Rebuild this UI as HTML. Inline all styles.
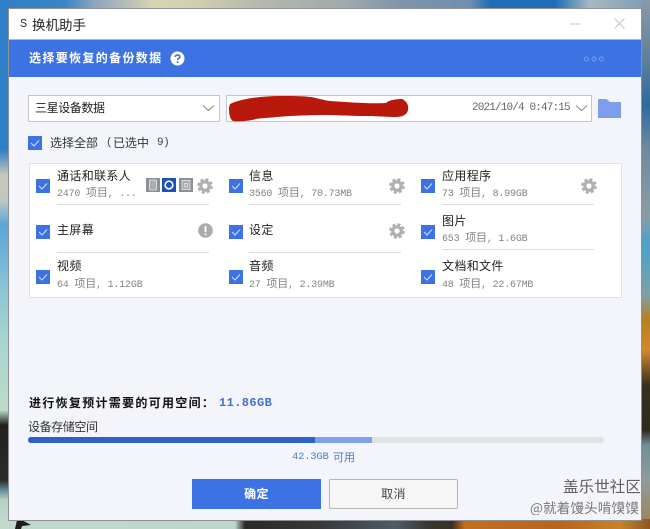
<!DOCTYPE html>
<html lang="zh"><head><meta charset="utf-8"><title>换机助手</title>
<style>
html,body{margin:0;padding:0}
body{width:650px;height:529px;position:relative;overflow:hidden;background:#c5dccf;font-family:"Liberation Sans","Noto Sans CJK SC",sans-serif}
div,svg{position:absolute}
.t{white-space:nowrap;color:#222;font-size:12px;line-height:16px;letter-spacing:.35px;font-family:"Noto Sans CJK SC",sans-serif}
.s{white-space:nowrap;color:#838383;font-size:10px;line-height:14px;font-family:"Liberation Mono","Noto Sans CJK SC",monospace;letter-spacing:-.2px}
.s b{font-weight:400;font-size:11px}
.cb{width:14px;height:14px;background:#3d72e3}
.ln{height:1px;background:#dcdde0;width:152px}
.sel{background:#fff;border:1px solid #c4c6ca;box-sizing:border-box}
</style></head><body>
<div style="left:0;top:0;width:650px;height:10px;background:linear-gradient(90deg,#2f7fc6 0,#3a84c6 65px,#8ea6bc 95px,#b5bcb8 125px,#d9d5b2 155px,#d2cfae 195px,#b5b8ac 260px,#a0aaac 345px,#7f95ab 400px,#6f8fae 470px,#1f6db8 490px,#1f6db8 555px,#a8b9c0 590px,#7a9ab5 650px)"></div>
<div style="left:0;top:0;width:9px;height:529px;background:linear-gradient(180deg,#2f80c8 0,#2e80c8 150px,#c9c8b8 175px,#c0c8c0 200px,#5aa5d8 225px,#8cc4d6 290px,#a8d4d0 340px,#bcdcc8 410px,#20201f 425px,#2a2a28 480px,#5f8a95 490px,#b5d3c4 500px,#c5dccf 529px)"></div>
<div style="left:641px;top:0;width:9px;height:529px;background:linear-gradient(180deg,#8a9aa8 0,#5f8096 60px,#2d6a9e 105px,#6f8a9e 150px,#8b9ca6 215px,#4aa2cb 245px,#7fa0a6 295px,#b8801f 320px,#cf8a2c 350px,#3a2f20 385px,#2e2a20 430px,#6f8e96 445px,#8f9c9c 480px,#a08052 529px)"></div>
<div style="left:0;top:519px;width:650px;height:10px;background:linear-gradient(90deg,#c0d9cc 0,#bcd6cc 235px,#2c2a28 245px,#38383a 320px,#4e5c66 395px,#3a3530 430px,#3a3024 452px,#c46e20 465px,#b8651c 560px,#c8822a 620px,#8a5a22 650px)"></div>
<svg style="left:14px;top:519px" width="18" height="10"><path d="M1 10 L3 1 L6 0 L17 6 L8 7 L7 10Z" fill="#1c1c1c"/></svg>

<div style="left:8px;top:8px;width:634px;height:513px;background:#8d9095"></div>
<div style="left:9px;top:9px;width:632px;height:511px;background:#f3f5fa"></div>
<div style="left:9px;top:9px;width:632px;height:30px;background:#fff"></div>
<div style="left:9px;top:39px;width:632px;height:1px;background:#a9bbe0"></div>
<div style="left:9px;top:40px;width:632px;height:37px;background:#3d72e3"></div>

<div class="s" style="left:20px;top:17px;font-size:12px;color:#333">S</div>
<div class="t" style="left:32px;top:15px;font-size:13.5px;line-height:18px;letter-spacing:0;color:#222">换机助手</div>
<svg style="left:569px;top:18px" width="15" height="12"><path d="M1 6H11.5" stroke="#cfcfcf" stroke-width="1.2"/></svg>
<svg style="left:613px;top:17px" width="14" height="14"><path d="M1.5 1.5L11.5 11.5M11.5 1.5L1.5 11.5" stroke="#c8c8c8" stroke-width="1.1" fill="none"/></svg>

<div class="t" style="left:29px;top:50px;color:#fff;font-size:12px;font-weight:700;letter-spacing:1.35px">选择要恢复的备份数据</div>
<svg style="left:170px;top:51px" width="15" height="15"><circle cx="7.5" cy="7.5" r="7" fill="#fff"/><path d="M5.2 6C5.3 3.4 9.9 3.4 9.9 5.9C9.9 7.4 7.6 7.4 7.6 9" fill="none" stroke="#3d72e3" stroke-width="1.6"/><circle cx="7.6" cy="11" r="1" fill="#3d72e3"/></svg>
<svg style="left:583px;top:54px" width="22" height="10" fill="none" stroke="#7d9eea" stroke-width="1"><circle cx="3.5" cy="5" r="2"/><circle cx="11" cy="5" r="2"/><circle cx="18.5" cy="5" r="2"/></svg>

<div class="sel" style="left:28px;top:95px;width:192px;height:27px"></div>
<div class="t" style="left:35px;top:100px;color:#222;letter-spacing:-.4px">三星设备数据</div>
<svg style="left:202px;top:104px" width="14" height="9"><path d="M1 1.5L6.5 6.5L12 1.5" fill="none" stroke="#8a8a8a" stroke-width="1.1"/></svg>
<div class="sel" style="left:226px;top:95px;width:366px;height:27px"></div>
<svg style="left:226px;top:94px" width="190" height="30"><path d="M4 10C14 5 34 2 54 2C66 2 76 2 84 3C92 4 96 6 104 7C122 8 142 10 160 9C163 6 170 5 176 5C181 7 183 12 182 16C181 21 176 23 170 23C158 23 152 22 140 22C124 22 112 21 100 21C82 21 62 22 50 23C42 24 36 24 30 25C24 27 12 28 7 27C3 25 2 14 4 10Z" fill="#b9180c"/></svg>
<div class="s" style="left:472px;top:101px;color:#666;font-size:11px;letter-spacing:-.85px">2021/10/4 0:47:15</div>
<svg style="left:575px;top:104px" width="14" height="9"><path d="M1 1.5L6.5 6.5L12 1.5" fill="none" stroke="#8a8a8a" stroke-width="1.1"/></svg>
<svg style="left:598px;top:99px" width="24" height="20"><path d="M0 1C0 .4.4 0 1 0H8.5L12 3H23V19H0Z" fill="#7b9fee"/></svg>

<svg class="cb" style="left:28px;top:136px" viewBox="0 0 14 14"><path d="M3 7L6 10L11 4.5" fill="none" stroke="#cfdcf8" stroke-width="1.1"/></svg>
<div class="t" style="left:50px;top:135px;letter-spacing:0;color:#333">选择全部</div>
<div class="s" style="left:106px;top:136px;font-size:11px;color:#444">(</div>
<div class="t" style="left:113px;top:135px;letter-spacing:0;color:#333">已选中</div>
<div class="s" style="left:157px;top:136px;font-size:11px;color:#444;letter-spacing:-.5px">9)</div>

<div style="left:29px;top:163px;width:593px;height:135px;box-sizing:border-box;background:#fff;border:1px solid #dfe1e6"></div>

<svg class="cb" style="left:36px;top:179px" viewBox="0 0 14 14"><path d="M3 7L6 10L11 4.5" fill="none" stroke="#cfdcf8" stroke-width="1.1"/></svg>
<svg class="cb" style="left:36px;top:225px" viewBox="0 0 14 14"><path d="M3 7L6 10L11 4.5" fill="none" stroke="#cfdcf8" stroke-width="1.1"/></svg>
<svg class="cb" style="left:36px;top:270px" viewBox="0 0 14 14"><path d="M3 7L6 10L11 4.5" fill="none" stroke="#cfdcf8" stroke-width="1.1"/></svg>
<svg class="cb" style="left:229px;top:179px" viewBox="0 0 14 14"><path d="M3 7L6 10L11 4.5" fill="none" stroke="#cfdcf8" stroke-width="1.1"/></svg>
<svg class="cb" style="left:229px;top:225px" viewBox="0 0 14 14"><path d="M3 7L6 10L11 4.5" fill="none" stroke="#cfdcf8" stroke-width="1.1"/></svg>
<svg class="cb" style="left:229px;top:270px" viewBox="0 0 14 14"><path d="M3 7L6 10L11 4.5" fill="none" stroke="#cfdcf8" stroke-width="1.1"/></svg>
<svg class="cb" style="left:421px;top:179px" viewBox="0 0 14 14"><path d="M3 7L6 10L11 4.5" fill="none" stroke="#cfdcf8" stroke-width="1.1"/></svg>
<svg class="cb" style="left:421px;top:225px" viewBox="0 0 14 14"><path d="M3 7L6 10L11 4.5" fill="none" stroke="#cfdcf8" stroke-width="1.1"/></svg>
<svg class="cb" style="left:421px;top:270px" viewBox="0 0 14 14"><path d="M3 7L6 10L11 4.5" fill="none" stroke="#cfdcf8" stroke-width="1.1"/></svg>

<div class="t" style="left:57px;top:168px">通话和联系人</div>
<div class="s" style="left:57px;top:187px">2470 <b>项目</b>, ...</div>
<div class="ln" style="left:57px;top:204px"></div>
<div class="t" style="left:57px;top:222px">主屏幕</div>
<div class="ln" style="left:57px;top:252px"></div>
<div class="t" style="left:57px;top:258px">视频</div>
<div class="s" style="left:57px;top:278px">64 <b>项目</b>, 1.12GB</div>

<div class="t" style="left:249px;top:168px">信息</div>
<div class="s" style="left:249px;top:187px">3560 <b>项目</b>, 70.73MB</div>
<div class="ln" style="left:249px;top:204px"></div>
<div class="t" style="left:249px;top:222px">设定</div>
<div class="ln" style="left:249px;top:252px"></div>
<div class="t" style="left:249px;top:258px">音频</div>
<div class="s" style="left:249px;top:278px">27 <b>项目</b>, 2.39MB</div>

<div class="t" style="left:442px;top:168px">应用程序</div>
<div class="s" style="left:442px;top:187px">73 <b>项目</b>, 8.99GB</div>
<div class="ln" style="left:442px;top:204px"></div>
<div class="t" style="left:442px;top:213px">图片</div>
<div class="s" style="left:442px;top:232px">653 <b>项目</b>, 1.6GB</div>
<div class="ln" style="left:442px;top:249px"></div>
<div class="t" style="left:442px;top:258px">文档和文件</div>
<div class="s" style="left:442px;top:278px">48 <b>项目</b>, 22.67MB</div>

<svg style="left:146px;top:178px" width="14" height="14"><rect width="14" height="14" fill="#8b9094"/><rect x="3.5" y="2" width="7" height="10" rx="1" fill="#a9acae" stroke="#d8dadb" stroke-width="1"/></svg>
<svg style="left:162px;top:178px" width="14" height="14"><rect width="14" height="14" fill="#1f52b5"/><circle cx="7" cy="7" r="3.8" fill="none" stroke="#fff" stroke-width="1.6"/><path d="M5 9L9 5" stroke="#1f52b5" stroke-width="1.5"/></svg>
<svg style="left:179px;top:178px" width="14" height="14"><rect width="14" height="14" fill="#8b9094"/><path d="M3 2.5H11V11.5H3Z" fill="#a9acae" stroke="#d8dadb"/><rect x="5.5" y="5.5" width="3" height="3.5" fill="none" stroke="#e0e2e3" stroke-width=".8"/></svg>

<svg style="left:197px;top:178px" width="16" height="16" viewBox="0 0 16 16"><circle cx="8" cy="8" r="4.2" fill="none" stroke="#b0b0b0" stroke-width="3.2"/><circle cx="8" cy="8" r="6.6" fill="none" stroke="#b0b0b0" stroke-width="2.4" stroke-dasharray="3.2 2"/></svg>
<svg style="left:389px;top:178px" width="16" height="16" viewBox="0 0 16 16"><circle cx="8" cy="8" r="4.2" fill="none" stroke="#b0b0b0" stroke-width="3.2"/><circle cx="8" cy="8" r="6.6" fill="none" stroke="#b0b0b0" stroke-width="2.4" stroke-dasharray="3.2 2"/></svg>
<svg style="left:389px;top:223px" width="16" height="16" viewBox="0 0 16 16"><circle cx="8" cy="8" r="4.2" fill="none" stroke="#b0b0b0" stroke-width="3.2"/><circle cx="8" cy="8" r="6.6" fill="none" stroke="#b0b0b0" stroke-width="2.4" stroke-dasharray="3.2 2"/></svg>
<svg style="left:581px;top:178px" width="16" height="16" viewBox="0 0 16 16"><circle cx="8" cy="8" r="4.2" fill="none" stroke="#b0b0b0" stroke-width="3.2"/><circle cx="8" cy="8" r="6.6" fill="none" stroke="#b0b0b0" stroke-width="2.4" stroke-dasharray="3.2 2"/></svg>
<svg style="left:198px;top:223px" width="15" height="15"><circle cx="7.5" cy="7.5" r="7.3" fill="#ababab"/><path d="M7.5 3V9" stroke="#fff" stroke-width="1.8"/><circle cx="7.5" cy="11.2" r="1" fill="#fff"/></svg>

<div class="t" style="left:29px;top:395px;font-weight:700;color:#111;letter-spacing:1.3px;font-size:12px">进行恢复预计需要的可用空间：</div>
<div class="s" style="left:219px;top:396px;font-weight:700;color:#3d72d0;font-size:12px;letter-spacing:.4px">11.86GB</div>
<div class="t" style="left:28px;top:419px;color:#333;letter-spacing:-.4px">设备存储空间</div>

<div style="left:28px;top:437px;width:576px;height:6px;border-radius:3px;background:#e0e2e5;overflow:hidden">
<div style="left:0;top:0;width:344px;height:6px;background:#7da1ee"></div>
<div style="left:0;top:0;width:287px;height:6px;background:#2e62c6"></div>
</div>
<div class="s" style="left:292px;top:450px;color:#4f7cc0;font-size:10.5px">42.3GB</div>
<div class="t" style="left:333px;top:449px;color:#4f7cc0;font-size:11px;letter-spacing:0">可用</div>

<div style="left:192px;top:479px;width:129px;height:30px;background:#3d72e3"></div>
<div class="t" style="left:192px;top:486px;width:129px;text-align:center;color:#fff;font-weight:700">确定</div>
<div style="left:329px;top:479px;width:129px;height:30px;box-sizing:border-box;background:#f6f6f6;border:1px solid #b4b4b4;border-radius:2px"></div>
<div class="t" style="left:329px;top:486px;width:129px;text-align:center;color:#444">取消</div>

<div class="t" style="left:563px;top:476px;font-size:15.5px;line-height:20px;letter-spacing:.1px;color:#606060">盖乐世社区</div>
<div class="t" style="left:530px;top:499px;font-size:13.7px;line-height:16px;letter-spacing:0;color:#777;width:111px;overflow:hidden">@就着馒头啃馍馍</div>
</body></html>
